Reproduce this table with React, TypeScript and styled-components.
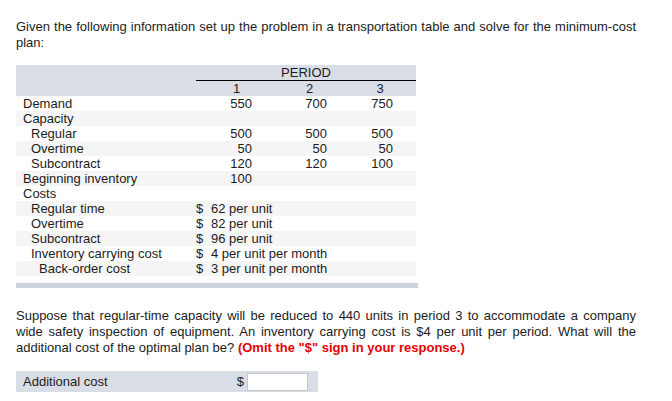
import React from "react";
import styled, { createGlobalStyle } from "styled-components";

const GlobalStyle = createGlobalStyle`
  body {
    margin: 0;
    background: #ffffff;
    font-family: "Liberation Sans", Arial, sans-serif;
    color: #1c1c1c;
  }
`;

const Page = styled.div`
  width: 672px;
  padding: 19px 16px 0 16px;
  box-sizing: border-box;
`;

const Para = styled.p<{ $gap?: number }>`
  margin: ${(p) => p.$gap ?? 0}px 0 0 0;
  font-size: 13px;
  line-height: 16px;
  text-align: justify;
  width: 620px;
`;

const Warn = styled.span`
  color: #e60000;
  font-weight: bold;
`;

const Table = styled.table`
  margin-top: 14px;
  width: 400px;
  border-collapse: collapse;
  table-layout: fixed;
  font-size: 13px;
  line-height: 15px;
`;

const HeadRow = styled.tr`
  background: #d9dde6;
`;

const Row = styled.tr<{ $shade: boolean }>`
  background: ${(p) => (p.$shade ? "#f5f5f5" : "#ffffff")};
`;

const Label = styled.td<{ $indent: number }>`
  padding: 0 0 0 ${(p) => 7 + p.$indent * 8}px;
  white-space: nowrap;
  height: 15px;
`;

const PeriodCell = styled.td`
  text-align: center;
  padding: 0;
  border-bottom: 1px solid #000;
  height: 15px;
`;

const HeadNum = styled.td<{ $shift: number }>`
  text-align: center;
  padding: 0 0 0 ${(p) => p.$shift}px;
  height: 15px;
`;

const Num = styled.td<{ $pad: number }>`
  text-align: right;
  padding: 0 ${(p) => p.$pad}px 0 0;
`;

const CostCell = styled.td`
  padding: 0;
  white-space: nowrap;
`;

const Dollar = styled.span`
  display: inline-block;
  width: 15px;
`;

const BottomBar = styled.div`
  margin-top: 7px;
  width: 402px;
  height: 5px;
  background: #cdd2dd;
`;

const AnswerBar = styled.div`
  margin-top: 15px;
  width: 302px;
  height: 21px;
  background: #d9dde6;
  display: flex;
  align-items: center;
  font-size: 13px;
  padding-left: 7px;
  box-sizing: border-box;
`;

const AnswerLabel = styled.span`
  flex: 1;
`;

const AnswerDollar = styled.span`
  margin-right: 3px;
`;

const AnswerInput = styled.input`
  width: 61px;
  height: 18px;
  box-sizing: border-box;
  border: 1px solid #c8c8c8;
  background: #fff;
  margin: 0 10px 0 0;
  padding: 0;
`;

const pads = [17, 15, 23];
const shifts = [8, 8, 2];

type DataRow = { label: string; indent: number; values?: string[]; cost?: string };

const rows: DataRow[] = [
  { label: "Demand", indent: 0, values: ["550", "700", "750"] },
  { label: "Capacity", indent: 0, values: ["", "", ""] },
  { label: "Regular", indent: 1, values: ["500", "500", "500"] },
  { label: "Overtime", indent: 1, values: ["50", "50", "50"] },
  { label: "Subcontract", indent: 1, values: ["120", "120", "100"] },
  { label: "Beginning inventory", indent: 0, values: ["100", "", ""] },
  { label: "Costs", indent: 0, values: ["", "", ""] },
  { label: "Regular time", indent: 1, cost: "62 per unit" },
  { label: "Overtime", indent: 1, cost: "82 per unit" },
  { label: "Subcontract", indent: 1, cost: "96 per unit" },
  { label: "Inventory carrying cost", indent: 1, cost: "4 per unit per month" },
  { label: "Back-order cost", indent: 2, cost: "3 per unit per month" },
];

export default function App() {
  return (
    <Page>
      <GlobalStyle />
      <Para>
        Given the following information set up the problem in a transportation table and solve for the
        minimum-cost plan:
      </Para>
      <Table>
        <colgroup>
          <col style={{ width: 180 }} />
          <col style={{ width: 73 }} />
          <col style={{ width: 73 }} />
          <col style={{ width: 74 }} />
        </colgroup>
        <thead>
          <HeadRow>
            <td />
            <PeriodCell colSpan={3}>PERIOD</PeriodCell>
          </HeadRow>
          <HeadRow>
            <td />
            {["1", "2", "3"].map((h, j) => (
              <HeadNum key={h} $shift={shifts[j]}>
                {h}
              </HeadNum>
            ))}
          </HeadRow>
        </thead>
        <tbody>
          {rows.map((r, i) => (
            <Row key={i} $shade={i % 2 === 1}>
              <Label $indent={r.indent}>{r.label}</Label>
              {r.cost ? (
                <CostCell colSpan={3}>
                  <Dollar>$</Dollar>
                  {r.cost}
                </CostCell>
              ) : (
                r.values!.map((v, j) => (
                  <Num key={j} $pad={pads[j]}>
                    {v}
                  </Num>
                ))
              )}
            </Row>
          ))}
        </tbody>
      </Table>
      <BottomBar />
      <Para $gap={20}>
        Suppose that regular-time capacity will be reduced to 440 units in period 3 to accommodate a company
        wide safety inspection of equipment. An inventory carrying cost is $4 per unit per period. What will the
        additional cost of the optimal plan be? <Warn>(Omit the "$" sign in your response.)</Warn>
      </Para>
      <AnswerBar>
        <AnswerLabel>Additional cost</AnswerLabel>
        <AnswerDollar>$</AnswerDollar>
        <AnswerInput type="text" />
      </AnswerBar>
    </Page>
  );
}
